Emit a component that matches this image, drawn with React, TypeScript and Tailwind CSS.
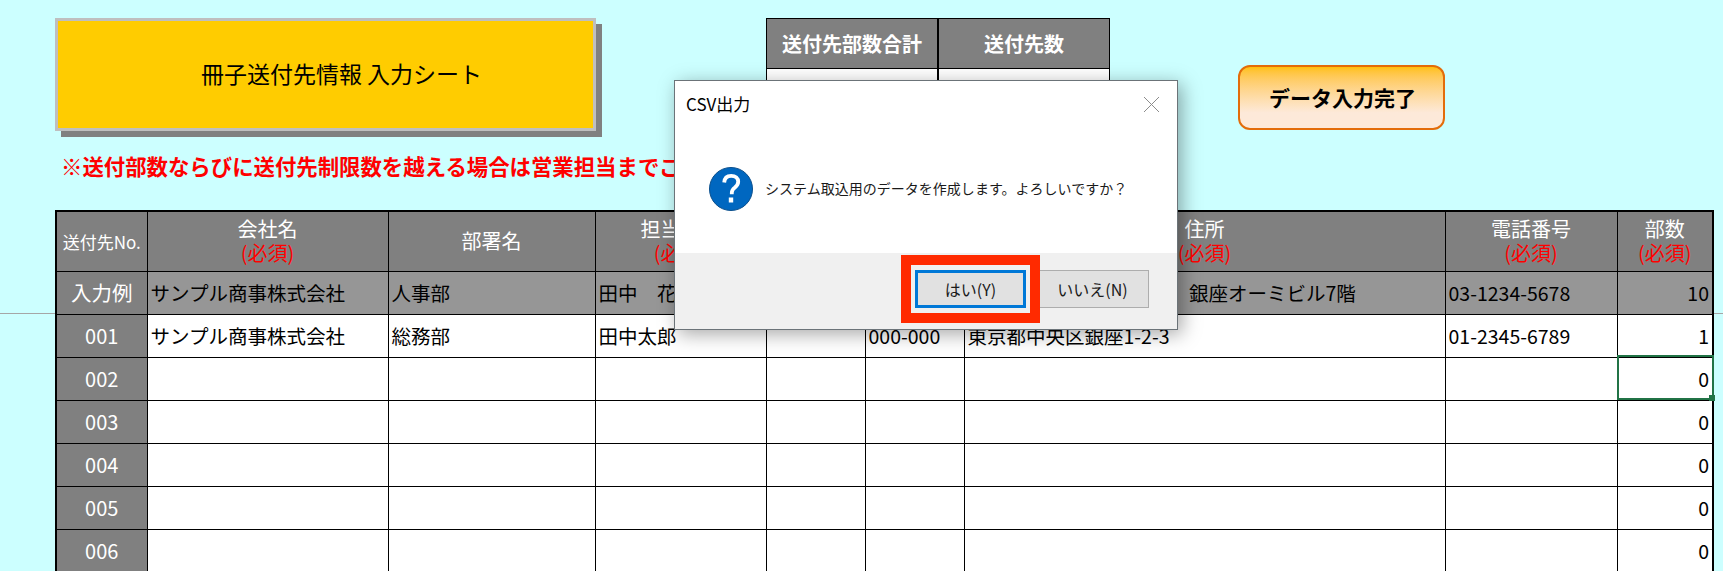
const colWidths = [91, 241, 207, 171, 99, 99, 481, 172, 96]

const cellText = 'px-[3px] text-[19.500px] leading-none text-black whitespace-nowrap overflow-visible'

function HeaderCell({ title, required }: { title?: string; required?: boolean }) {
  return (
    <th className="border border-black bg-[#808080] p-0 text-center font-normal text-white">
      <div className="text-[20px] leading-[24px]">{title}</div>
      {required && <div className="text-[20px] leading-[24px] text-[#ff0000]">(必須)</div>}
    </th>
  )
}

function Row({ no, cells, sample }: { no: string; cells: string[]; sample?: boolean }) {
  const bg = sample ? 'bg-[#969696]' : 'bg-white'
  return (
    <tr className="h-[43px]">
      <td className={`border border-black bg-[#808080] p-0 text-center leading-none text-white ${sample ? 'text-[20.500px]' : 'text-[20px]'}`}>
        {no}
      </td>
      {cells.map((text, i) => (
        <td key={i} className={`border border-black ${bg} ${cellText} ${i === 7 ? 'text-right' : 'text-left'}`}>
          {text}
        </td>
      ))}
    </tr>
  )
}

function QuestionIcon() {
  return (
    <svg width="44" height="44" viewBox="0 0 44 44" className="shrink-0">
      <circle cx="22" cy="22" r="21.500" fill="#0067c0" stroke="#0b4f8c" />
      <path
        d="M15.200 15.500c.3-4.400 3.100-6.700 7-6.700 4.300 0 7 2.400 7 6 0 2.700-1.400 4.200-3.300 5.700-2 1.500-3.100 2.700-3.100 5.300v1.500"
        fill="none"
        stroke="#fff"
        strokeWidth="3.800"
      />
      <rect x="19.800" y="30.500" width="4.400" height="5" fill="#fff" />
    </svg>
  )
}

function Dialog() {
  return (
    <div className="absolute left-[674px] top-[80px] z-20 flex h-[250px] w-[504px] flex-col border border-[#6b7378] bg-white text-[#1a1a1a] shadow-[4px_4px_18px_rgba(0,0,0,0.35)]">
      <div className="flex h-[46px] items-center justify-between pl-[11px] pr-[17px]">
        <span className="text-[17px] text-black">CSV出力</span>
        <svg width="17" height="17" viewBox="0 0 17 17">
          <path d="M1 1l15 15M16 1L1 16" stroke="#8c8c8c" strokeWidth="1" fill="none" />
        </svg>
      </div>
      <div className="flex flex-1 items-start gap-[12px] pl-[34px] pt-[40px]">
        <QuestionIcon />
        <span className="whitespace-nowrap pt-[9px] text-[14px] leading-[24px] tracking-[0.02px]">
          システム取込用のデータを作成します。よろしいですか？
        </span>
      </div>
      <div className="flex h-[76px] items-start justify-end gap-[10px] bg-[#f0f0f0] pr-[28px] pt-[17px]">
        <button className="h-[38px] w-[111px] border-[3px] border-[#0078d7] bg-[#e1e1e1] text-[16px] text-[#1a1a1a]">
          はい(Y)
        </button>
        <button className="h-[38px] w-[113px] border border-[#adadad] bg-[#e1e1e1] text-[16px] text-[#1a1a1a]">
          いいえ(N)
        </button>
      </div>
    </div>
  )
}

export default function App() {
  return (
    <div
      className="relative h-[571px] w-[1723px] overflow-hidden bg-[#ccffff]"
      style={{ fontFamily: '"Noto Sans CJK JP", sans-serif' }}
    >
      <div className="absolute left-0 top-[313px] h-px w-full bg-[#a6a6a6]" />

      <div className="relative pl-[55px] pt-[18px]">
        <div className="flex h-[113px] items-start">
          <div className="flex h-[113px] w-[541px] items-center justify-center border-[3px] border-[#bfbfbf] bg-[#ffcc00] pb-[2px] pl-[32px] text-[23px] text-black shadow-[6px_6px_0_#808080]">
            冊子送付先情報 入力シート
          </div>

          <table className="ml-[170px] w-[344px] table-fixed border-collapse">
            <tbody>
              <tr className="h-[50px]">
                <th className="border border-r-2 border-black bg-[#808080] text-[20px] font-bold text-white">送付先部数合計</th>
                <th className="border border-black bg-[#808080] text-[20px] font-bold text-white">送付先数</th>
              </tr>
              <tr className="h-[50px]">
                <td className="border border-r-2 border-black bg-white" />
                <td className="border border-black bg-white" />
              </tr>
            </tbody>
          </table>

          <button className="ml-[128px] mt-[47px] h-[65px] w-[207px] rounded-[12px] border-2 border-[#e36c0a] bg-gradient-to-b from-[#ffc000] to-[#fde9d9] to-[75%] pl-[2px] text-[21px] font-bold text-black">
            データ入力完了
          </button>
        </div>

        <p className="mt-[17px] h-[36px] pl-[6px] text-[21.400px] font-bold leading-[36px] whitespace-nowrap text-[#ff0000]">
          ※送付部数ならびに送付先制限数を越える場合は営業担当までご連絡ください
        </p>

        <table className="mt-[26px] w-[1657px] table-fixed border-collapse border-2 border-black">
          <colgroup>
            {colWidths.map((w, i) => (
              <col key={i} style={{ width: w }} />
            ))}
          </colgroup>
          <thead>
            <tr className="h-[60px]">
              <th className="border border-black bg-[#808080] p-0 text-center text-[17px] font-normal whitespace-nowrap text-white">
                送付先No.
              </th>
              <HeaderCell title="会社名" required />
              <HeaderCell title="部署名" />
              <HeaderCell title="担当者名" required />
              <HeaderCell />
              <HeaderCell />
              <HeaderCell title="住所" required />
              <HeaderCell title="電話番号" required />
              <HeaderCell title="部数" required />
            </tr>
          </thead>
          <tbody>
            <Row
              sample
              no="入力例"
              cells={['サンプル商事株式会社', '人事部', '田中　花子', '', '', '東京都中央区銀座1-2-3　銀座オーミビル7階', '03-1234-5678', '10']}
            />
            <Row
              no="001"
              cells={['サンプル商事株式会社', '総務部', '田中太郎', '', '000-000', '東京都中央区銀座1-2-3', '01-2345-6789', '1']}
            />
            <Row no="002" cells={['', '', '', '', '', '', '', '0']} />
            <Row no="003" cells={['', '', '', '', '', '', '', '0']} />
            <Row no="004" cells={['', '', '', '', '', '', '', '0']} />
            <Row no="005" cells={['', '', '', '', '', '', '', '0']} />
            <Row no="006" cells={['', '', '', '', '', '', '', '0']} />
            <Row no="" cells={['', '', '', '', '', '', '', '']} />
          </tbody>
        </table>
      </div>

      {/* selected cell */}
      <div className="absolute left-[1617px] top-[355px] z-10 h-[45px] w-[97px] border-2 border-[#217346]">
        <div className="absolute -bottom-[3px] -right-[3px] size-[6px] bg-[#217346]" />
      </div>

      <Dialog />

      {/* annotation */}
      <div className="absolute left-[901px] top-[255px] z-30 h-[68px] w-[139px] border-[10px] border-[#ff2a00]" />
    </div>
  )
}
